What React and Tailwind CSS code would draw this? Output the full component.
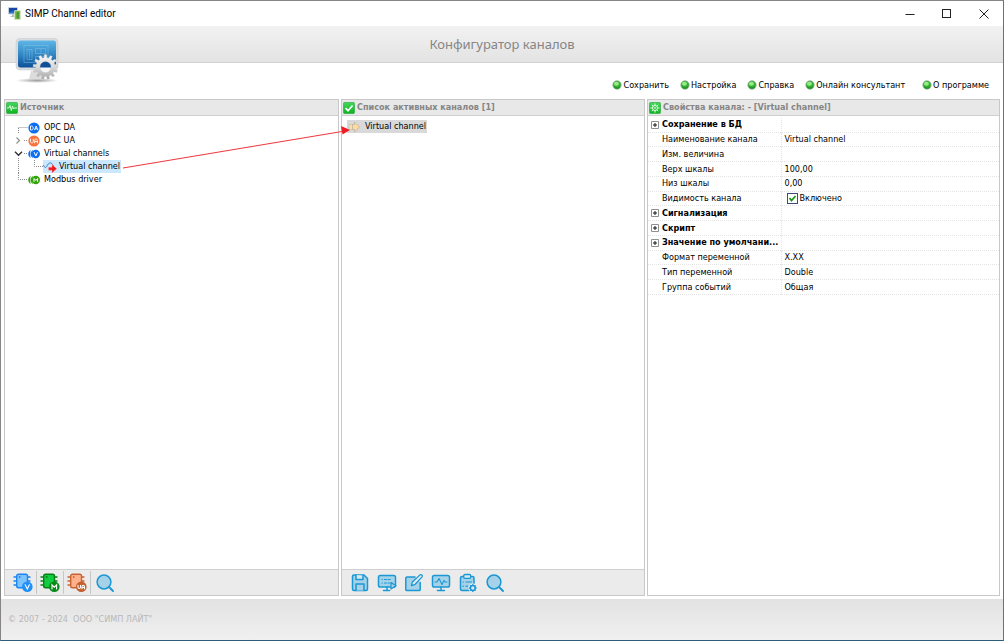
import React from "react";

const FONT = "font-['DejaVu_Sans_Condensed','DejaVu_Sans',sans-serif]";

function AppIcon() {
  return (
    <svg width="13" height="13" viewBox="0 0 13 13" aria-hidden="true">
      <rect x="0.5" y="0.5" width="9" height="6.5" rx="0.5" fill="#2f6fd0" stroke="#c4d0dc" />
      <path d="M1 1h8v2L1 5z" fill="#1646a8" />
      <path d="M4 7.5h2v1.5h2v1H2.5V9H4z" fill="#b5bcc4" />
      <rect x="6.5" y="3.5" width="6" height="9" rx="0.6" fill="#7cc04b" stroke="#dbe8cf" strokeWidth="0.7" />
      <path d="M8.500 5h2.500v6.500H8.500z" fill="#4d9630" />
    </svg>
  );
}

function gearOutline(cx, cy, outer, inner, teeth) {
  const pts = [];
  for (let i = 0; i < teeth; i++) {
    const a = (i * 2 * Math.PI) / teeth;
    const step = (2 * Math.PI) / teeth;
    [[-0.3, inner], [-0.2, outer], [0.2, outer], [0.3, inner]].forEach(([f, r]) => {
      pts.push(`${(cx + r * Math.sin(a + f * step)).toFixed(2)} ${(cy - r * Math.cos(a + f * step)).toFixed(2)}`);
    });
  }
  return `M${pts.join("L")}z`;
}

function LogoIcon() {
  return (
    <svg width="46" height="48" viewBox="0 0 46 48" aria-hidden="true">
      <defs>
        <linearGradient id="screen" x1="0" y1="0" x2="0" y2="1">
          <stop offset="0" stopColor="#5fb6e6" />
          <stop offset="0.5" stopColor="#3389c6" />
          <stop offset="1" stopColor="#0d4f98" />
        </linearGradient>
        <linearGradient id="gear" x1="0" y1="0" x2="0" y2="1">
          <stop offset="0" stopColor="#f8f8f8" />
          <stop offset="0.5" stopColor="#dadada" />
          <stop offset="1" stopColor="#a6a6a6" />
        </linearGradient>
        <radialGradient id="base">
          <stop offset="0" stopColor="#9c9c9c" />
          <stop offset="1" stopColor="#9c9c9c" stopOpacity="0" />
        </radialGradient>
      </defs>
      <ellipse cx="22" cy="42.500" rx="21" ry="2.500" fill="url(#base)" />
      <path d="M16 33h12v8H14z" fill="#dcdcdc" />
      <rect x="1" y="0.500" width="42" height="31.500" rx="4" fill="#d9dcde" stroke="#c5c8ca" strokeWidth="0.500" />
      <rect x="3" y="2.500" width="38" height="27" rx="2.500" fill="url(#screen)" />
      <g fill="none" stroke="#8fcaec" strokeWidth="0.700" opacity="0.600">
        <rect x="9" y="7.500" width="24" height="17" />
        <rect x="12" y="11.500" width="5" height="10" />
        <path d="M20.500 10.500h10v5h-10zM20.500 18.500h9v4h-9zM14.500 12.500v8M26 10.500v5" />
      </g>
      <circle cx="30.500" cy="29" r="6.500" fill="#0f4f95" />
      <path d="M24.500 29.500h12a6 6 0 0 1-12 0z" fill="#f4f6f8" />
      <path fillRule="evenodd" fill="url(#gear)" stroke="#c2c2c2" strokeWidth="0.300"
        d={gearOutline(30.5, 29, 12.5, 9.6, 13) + "M25 29a5.500 5.500 0 1 0 11 0a5.500 5.500 0 1 0 -11 0z"} />
    </svg>
  );
}

function GreenDot() {
  return (
    <svg width="10" height="10" viewBox="0 0 10 10" aria-hidden="true">
      <circle cx="5" cy="5" r="4.200" fill="#35b035" stroke="#8aa88a" strokeWidth="0.700" />
      <ellipse cx="4.400" cy="3.800" rx="2.500" ry="2" fill="#93ec84" />
      <path d="M2 6.500a3.600 3.600 0 0 0 6 0" stroke="#128a1c" fill="none" />
    </svg>
  );
}

function PanelIcon({ kind }) {
  return (
    <svg width="12" height="12" viewBox="0 0 12 12" aria-hidden="true">
      <defs>
        <linearGradient id={"badge-" + kind} x1="0" y1="0" x2="0" y2="1">
          <stop offset="0" stopColor="#43d65a" />
          <stop offset="1" stopColor="#0fb222" />
        </linearGradient>
      </defs>
      <rect x="0.500" y="0.500" width="11" height="11" rx="1" fill={`url(#badge-${kind})`} stroke="#22a536" strokeWidth="0.600" />
      {kind === "source" && <path d="M1 6h2l1-2.500L5.300 8.500 6.500 4l1 3 .7-1H11" fill="none" stroke="#e9ffe9" strokeWidth="0.900" />}
      {kind === "list" && <path d="M2.500 6l2.500 2.700L9.600 3.500" fill="none" stroke="#fff" strokeWidth="1.700" />}
      {kind === "props" && (
        <g stroke="#eaffea" strokeWidth="1" fill="none">
          <circle cx="6" cy="6" r="2.500" />
          <path d="M6 1.500v1.700M6 8.800v1.700M1.500 6h1.700M8.800 6h1.700M2.800 2.800L4 4M8 8l1.200 1.200M9.200 2.800L8 4M4 8L2.800 9.200" />
          <circle cx="6" cy="6" r="0.500" />
        </g>
      )}
    </svg>
  );
}

function TreeIcon({ kind }) {
  if (kind === "child") {
    return (
      <svg width="14" height="13" viewBox="0 0 14 13" aria-hidden="true">
        <path d="M0 5c1 0 1 2.500 2.500 2.500S4.500 3.500 6.500 3s3 1 4 3" fill="none" stroke="#3b86c8" strokeWidth="1" />
        <path d="M5.500 7.200h3.500V4.500L13.800 8.700 9 13v-2.800H5.500z" fill="#f01822" stroke="#ffb0b0" strokeWidth="0.400" />
      </svg>
    );
  }
  const color = { DA: "#0d6ff0", UA: "#f8743c", V: "#0d6ff0", M: "#35a40c" }[kind];
  if (kind === "DA" || kind === "UA") {
    return (
      <svg width="12" height="12" viewBox="0 0 12 12" aria-hidden="true">
        <circle cx="6" cy="6" r="5.600" fill={color} />
        {kind === "DA"
          ? <path d="M2.500 4v4h1c2.300 0 2.300-4 0-4zM6.500 8.200L8.200 4l1.700 4.200M7 6.800h2.300" fill="none" stroke="#fff" strokeWidth="0.900" />
          : <path d="M2.500 3.800v2.700c0 2 2.800 2 2.800 0V3.800M6.700 8.200V5.500c0-2 2.800-2 2.800 0v2.700M6.700 6.600h2.800" fill="none" stroke="#fff" strokeWidth="0.900" />}
      </svg>
    );
  }
  return (
    <svg width="12" height="12" viewBox="0 0 12 12" aria-hidden="true">
      <path d="M2.800 2C-.6 3.500-.6 8.500 2.800 10 1.700 7.500 1.700 4.500 2.800 2z" fill={color} />
      <path d="M5.200 2C1.600 3.500 1.600 8.500 5.200 10 3.900 7.500 3.900 4.500 5.200 2z" fill={color} />
      <circle cx="7.800" cy="6" r="4.200" fill={color} />
      <path d={kind === "V" ? "M6.100 4.200L7.800 8l1.700-3.800" : "M6 7.800V4.500L7.800 6.500l1.800-2v3.300"} fill="none" stroke="#fff" strokeWidth="1" />
    </svg>
  );
}

function Branch({ kind }) {
  const paths = {
    first: "M4.500 7V13M4.500 6.500H14",
    closed: "M10 6.500H14",
    open: "M10 6.500H14M4.500 11V13",
    child: "M4.500 0V13M20.500 0V6.500H29",
    last: "M4.500 0V6.500H14",
  };
  const width = kind === "child" ? 29 : 14;
  return (
    <svg width={width} height="13" viewBox={`0 0 ${width} 13`} className="shrink-0" aria-hidden="true">
      <path d={paths[kind]} fill="none" stroke="#8c8c8c" strokeWidth="1" strokeDasharray="1 1" />
      {kind === "closed" && <path d="M2.500 3.500L5.500 6.500l-3 3" fill="none" stroke="#909090" strokeWidth="1.200" />}
      {kind === "open" && <path d="M1 4.800L4.500 8.200 8 4.800" fill="none" stroke="#303030" strokeWidth="1.400" />}
    </svg>
  );
}

function ChipIcon({ kind }) {
  const c = {
    V: ["#7fc3fd", "#1d84f0", "#2090f8"],
    M: ["#10cc40", "#087f14", "#088a18"],
    UA: ["#ffb08c", "#c86434", "#c45e2c"],
  }[kind];
  return (
    <svg width="20" height="20" viewBox="0 0 20 20" strokeLinecap="round" aria-hidden="true">
      <path d="M1 4h2.500M1 8h2.500M1 12h2.500M14.500 4H17M14.500 8H17" stroke={c[1]} strokeWidth="1.400" />
      <rect x="3.700" y="1.200" width="10.800" height="13.600" rx="1.800" fill={c[0]} stroke={c[1]} strokeWidth="1.400" />
      <circle cx="6.700" cy="4" r="0.900" fill={c[1]} />
      <circle cx="14.300" cy="13.700" r="5.300" fill={c[2]} />
      <path fill="none" stroke="#fff" strokeWidth="1.100"
        d={{
          V: "M12.200 11.700l2.100 4.300 2.100-4.300",
          M: "M12 16v-4.200l2.300 2.300 2.300-2.300V16",
          UA: "M11 12.200v1.800c0 2 2.500 2 2.500 0v-1.800M15 15.700v-1.700c0-2.300 2.500-2.300 2.500 0v1.700M15 14.500h2.500",
        }[kind]} />
    </svg>
  );
}

function ToolIcon({ kind }) {
  const line = "#1b98d4";
  const pale = "#a5d2e9";
  return (
    <svg width="20" height="20" viewBox="0 0 20 20" fill="none" stroke={line} strokeWidth="1.500" strokeLinejoin="round" strokeLinecap="round" aria-hidden="true">
      {kind === "search" && <><circle cx="9" cy="9" r="6.900" fill={pale} /><path d="M14 14l4 4" strokeWidth="1.900" /></>}
      {kind === "save" && <><path d="M4 2h10l3.500 3.500V16a1.500 1.500 0 0 1-1.500 1.500H4a1.500 1.500 0 0 1-1.500-1.500v-12.500A1.500 1.500 0 0 1 4 2z" fill={pale} /><path d="M6 2v4.500h7V2.500" fill="#dbe8ee" /><path d="M6 17.500v-6.500h8v6.500" fill={pale} /></>}
      {kind === "monitor" && <><rect x="1.500" y="2.500" width="17" height="11.500" rx="1.800" fill={pale} /><path d="M10 14v3M6.500 17.500h7" /><path d="M4 9h2L8 5.500l3 6 2-4 1 1.500h2" strokeWidth="1.100" /></>}
      {kind === "play" && <><rect x="1.500" y="2.500" width="17" height="11.500" rx="1.800" fill={pale} /><path d="M10 14v3M6.500 17.500h6" /><path d="M5 6.500h.4M7.500 6.500h7M5 10h.4M7.500 10h5" strokeWidth="1.200" strokeDasharray="2 1.600" /><path d="M14 9.500l5 3.300-5 3.300z" fill={pale} strokeWidth="1.200" /></>}
      {kind === "edit" && <><path d="M11 4H3A1.200 1.200 0 0 0 1.800 5.200v11.200A1.200 1.200 0 0 0 3 17.600h12a1.200 1.200 0 0 0 1.200-1.200V9.500" fill={pale} /><path d="M7.500 12.500l.7-3.200 7.800-7.400c1.300-.9 3 .7 2.100 2L10.700 11.700z" fill="#e4eef2" strokeWidth="1.300" /></>}
      {kind === "clipboard" && <><rect x="2.500" y="3.500" width="13.500" height="14" rx="1.500" fill={pale} /><rect x="5.700" y="1.500" width="7" height="3.800" rx="1.200" fill="#dbe8ee" strokeWidth="1.300" /><path d="M5 9h.4M8 9h5.500M5 13.200h.4M8 13.200h1.500" strokeWidth="1.200" /><circle cx="14.800" cy="15" r="4.500" fill="#ebebeb" stroke="none" /><circle cx="14.800" cy="15" r="2.400" fill="#dbe8ee" /><path d="M14.800 11.600v.6M14.800 17.800v.6M11.400 15h.6M17.600 15h.6M12.400 12.600l.4.400M16.800 17l.4.400M17.200 12.600l-.4.400M12.800 17l-.4.400" strokeWidth="1.300" /></>}
    </svg>
  );
}

function ChannelIcon() {
  return (
    <svg width="14" height="12" viewBox="0 0 14 12" aria-hidden="true">
      <path d="M2 3.500h4v5H2z" fill="#f3dfb6" stroke="#c2b69c" strokeWidth="0.700" strokeDasharray="1 0.600" />
      <path d="M5.500 3.500h2V1L12.500 6l-5 5V8.500h-2z" fill="#ffdb9c" stroke="#bdb4a2" strokeWidth="0.800" />
    </svg>
  );
}

function Panel({ icon, title, tools, children }) {
  return (
    <section className="relative flex min-w-0 flex-col border border-[#c8c8c8] bg-white">
      <h2 className="flex h-4 shrink-0 items-center gap-[2px] border-b border-[#cfcfcf] bg-[#e8e8e8] px-px text-[9px] font-bold whitespace-nowrap text-[#858585]">
        <PanelIcon kind={icon} />
        {title}
      </h2>
      <div className="flex-1">{children}</div>
      {tools}
    </section>
  );
}

const menu = ["Сохранить", "Настройка", "Справка", "Онлайн консультант", "О программе"];

const tree = [
  { branch: "first", icon: "DA", label: "OPC DA" },
  { branch: "closed", icon: "UA", label: "OPC UA" },
  { branch: "open", icon: "V", label: "Virtual channels" },
  { branch: "child", icon: "child", label: "Virtual channel", selected: true },
  { branch: "last", icon: "M", label: "Modbus driver" },
];

const properties = [
  { group: "Сохранение в БД" },
  { name: "Наименование канала", value: "Virtual channel" },
  { name: "Изм. величина", value: "" },
  { name: "Верх шкалы", value: "100,00" },
  { name: "Низ шкалы", value: "0,00" },
  { name: "Видимость канала", check: "Включено" },
  { group: "Сигнализация" },
  { group: "Скрипт" },
  { group: "Значение по умолчани..." },
  { name: "Формат переменной", value: "X.XX" },
  { name: "Тип переменной", value: "Double" },
  { name: "Группа событий", value: "Общая" },
];

const listTools = [
  ["save", "Сохранить"],
  ["play", "Запуск"],
  ["edit", "Изменить"],
  ["monitor", "Монитор"],
  ["clipboard", "Параметры"],
  ["search", "Поиск"],
];

export default function App() {
  return (
    <div className={`flex min-h-screen flex-col border border-t-[#858585] border-r-[#69727c] border-b-[#2f5d7c] border-l-[#858585] bg-white text-[9px] leading-[13px] text-black ${FONT}`}>
      <div className="flex h-[25px] shrink-0 items-center justify-between pl-[7px]">
        <div className="flex items-center gap-1 font-[Roboto,sans-serif] text-[10px] text-black">
          <AppIcon />
          SIMP Channel editor
        </div>
        <div className="flex h-full">
          <button aria-label="Свернуть" className="grid w-[37px] place-items-center">
            <svg width="10" height="10" viewBox="0 0 10 10"><path d="M0.500 5.500h9" stroke="#222" /></svg>
          </button>
          <button aria-label="Развернуть" className="grid w-[37px] place-items-center">
            <svg width="10" height="10" viewBox="0 0 10 10"><rect x="0.500" y="0.500" width="8" height="8" fill="none" stroke="#222" /></svg>
          </button>
          <button aria-label="Закрыть" className="grid w-[38px] place-items-center">
            <svg width="10" height="10" viewBox="0 0 10 10"><path d="M0.500 0.500l9 9M9.500 0.500l-9 9" stroke="#222" /></svg>
          </button>
        </div>
      </div>

      <header className="relative flex h-[37px] shrink-0 items-center justify-center border-b border-[#d2d2d2] bg-linear-to-b from-[#f2f2f2] to-[#e3e3e3]">
        <h1 className="font-['Noto_Sans',sans-serif] text-[13px] text-[#858585]">Конфигуратор каналов</h1>
        <div className="absolute top-3 left-[14px]"><LogoIcon /></div>
      </header>

      <nav className="flex h-9 shrink-0 items-center justify-end gap-[11px] pt-2 pr-[14px]">
        {menu.map((label) => (
          <button key={label} className="flex items-center gap-px whitespace-nowrap last:ml-[6px]">
            <GreenDot />
            {label}
          </button>
        ))}
      </nav>

      <main className="grid flex-1 grid-cols-[335fr_304fr_353fr] gap-[2px] pr-[3px] pb-[3px] pl-[3px]">
        <Panel
          icon="source"
          title="Источник"
          tools={
            <div className="flex h-[26px] shrink-0 items-center border-t border-[#cfcfcf] bg-[#ebebeb] pl-[5px]">
              {["V", "M", "UA"].map((k) => (
                <button key={k} aria-label={`Драйвер ${k}`} className="grid h-[23px] w-[27px] place-items-center border-r border-[#c6c6c6]">
                  <ChipIcon kind={k} />
                </button>
              ))}
              <button aria-label="Поиск" className="grid h-[23px] w-[27px] place-items-center"><ToolIcon kind="search" /></button>
            </div>
          }
        >
          <ul className="pt-[5px] pl-[9px]">
            {tree.map((n) => (
              <li key={n.label} className="flex h-[13px] items-center">
                <Branch kind={n.branch} />
                <button className={`flex h-[13px] items-center whitespace-nowrap ${n.selected ? "gap-[2px] bg-[#cce8ff] pr-px" : "gap-1"}`}>
                  <TreeIcon kind={n.icon} />
                  {n.label}
                </button>
              </li>
            ))}
          </ul>
          <svg className="pointer-events-none absolute top-[24px] left-[115px] z-10 h-[46px] w-[calc(100%-103px)]" viewBox="0 0 230 46" preserveAspectRatio="none" aria-hidden="true">
            <path d="M3 44L222 7.500" stroke="#f0353c" strokeWidth="1" fill="none" />
            <path d="M230 6l-9-4 1.500 8.500z" fill="#ee1c24" />
          </svg>
        </Panel>

        <Panel
          icon="list"
          title="Список активных каналов [1]"
          tools={
            <div className="flex h-[26px] shrink-0 items-center border-t border-[#cfcfcf] bg-[#ebebeb] pl-1">
              {listTools.map(([k, label]) => (
                <button key={k} aria-label={label} className="grid h-[23px] w-[27px] place-items-center"><ToolIcon kind={k} /></button>
              ))}
            </div>
          }
        >
          <div className="pt-1 pl-[5px]">
            <button className="flex h-[13px] items-center gap-1 bg-[#d9d9d9] pr-px whitespace-nowrap">
              <ChannelIcon />
              Virtual channel
            </button>
          </div>
        </Panel>

        <Panel icon="props" title="Свойства канала: - [Virtual channel]">
          <table className="mt-[2px] h-[177px] w-full table-fixed border-collapse">
            <colgroup>
              <col className="w-[133px]" />
              <col />
            </colgroup>
            <tbody>
              {properties.map((p) => (
                <tr key={p.group || p.name} className="border-b border-dotted border-[#e4e4e4] leading-[13px]">
                  {p.group ? (
                    <th scope="row" className="border-r border-dotted border-[#e4e4e4] p-0 pl-[3px] text-left font-bold text-black">
                      <button className="flex items-center gap-[3px] whitespace-nowrap">
                        <svg width="8" height="8" viewBox="0 0 8 8" aria-hidden="true">
                          <path d="M0.500 0.500h7v7h-7z" fill="#fff" stroke="#909090" />
                          <path d="M2 4h4M4 2v4" stroke="#000" strokeWidth="0.900" />
                        </svg>
                        {p.group}
                      </button>
                    </th>
                  ) : (
                    <th scope="row" className="border-r border-dotted border-[#e4e4e4] p-0 pl-[14px] text-left font-normal whitespace-nowrap">{p.name}</th>
                  )}
                  <td className="p-0 pl-[3px]">
                    {p.check ? (
                      <label className="flex items-center gap-[2px] pl-[2px]">
                        <span className="grid size-[11px]">
                          <input type="checkbox" defaultChecked className="peer col-start-1 row-start-1 size-[11px] appearance-none border border-[#3c4a78] bg-white" />
                          <svg className="pointer-events-none invisible col-start-1 row-start-1 peer-checked:visible" width="11" height="11" viewBox="0 0 11 11" aria-hidden="true">
                            <path d="M2.500 5l2 2.500 4-4.500" stroke="#1c981c" strokeWidth="1.800" fill="none" />
                          </svg>
                        </span>
                        {p.check}
                      </label>
                    ) : (
                      p.value
                    )}
                  </td>
                </tr>
              ))}
            </tbody>
          </table>
        </Panel>
      </main>

      <footer className="flex h-[41px] shrink-0 items-center bg-linear-to-b from-[#e2e2e2] to-[#f0f0f0] pl-[7px] whitespace-pre text-[#b8b8b8]">
        © 2007 - 2024  ООО "СИМП ЛАЙТ"
      </footer>
    </div>
  );
}
